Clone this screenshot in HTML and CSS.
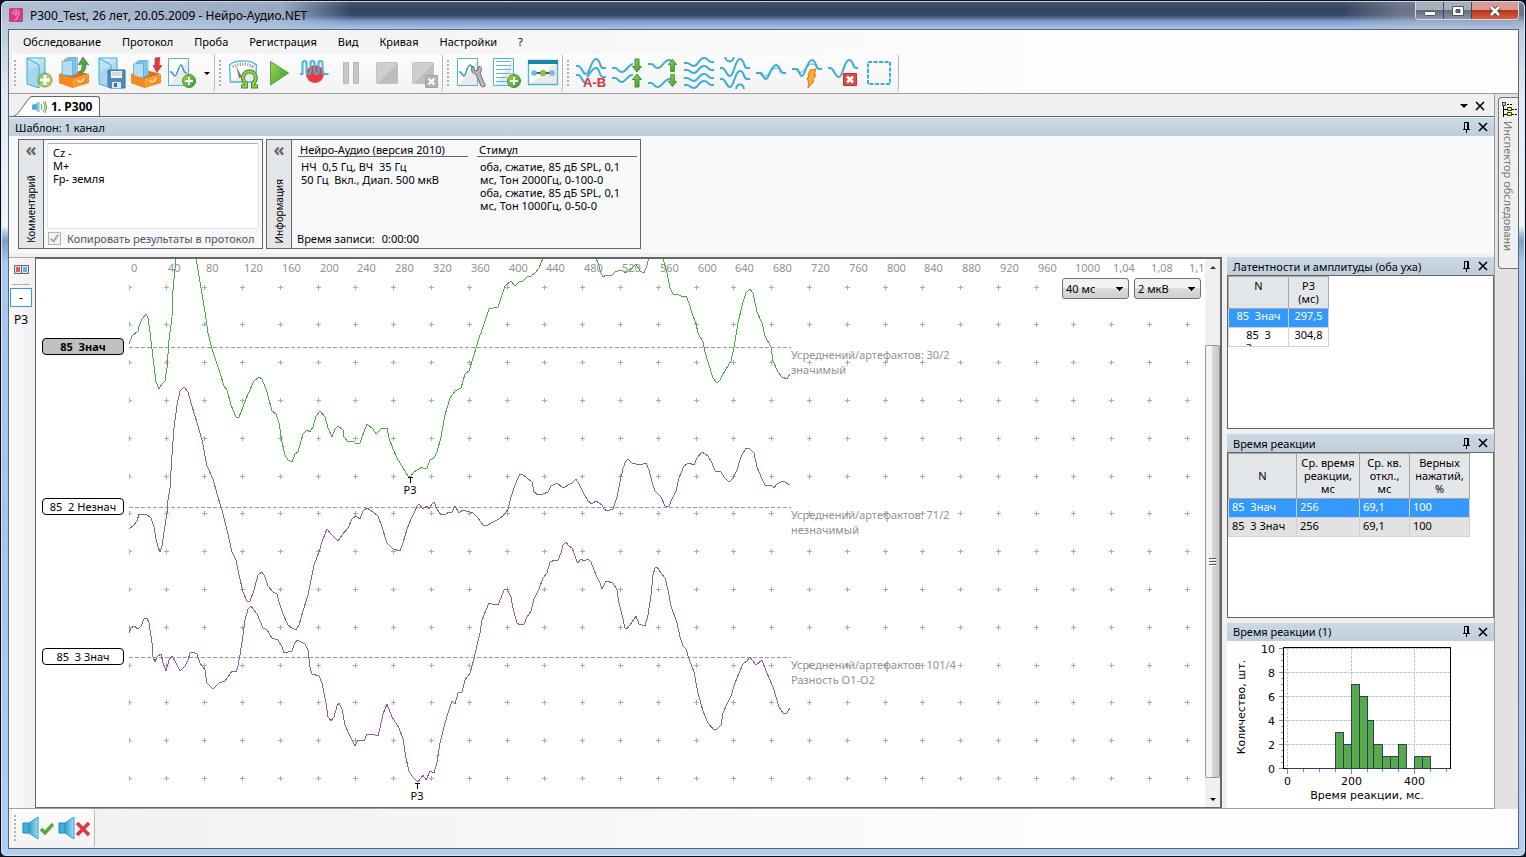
FILE: index.html
```html
<!DOCTYPE html>
<html lang="ru">
<head>
    <meta charset="UTF-8">
    <meta name="viewport" content="width=device-width, initial-scale=1.0">
    <title>P300_Test - Нейро-Аудио.NET</title>
    <link rel="stylesheet" href="styles.css">
</head>
<body>
    <!-- shared gradients and symbols -->
    <svg class="defs" width="0" height="0" aria-hidden="true">
        <defs>
            <linearGradient id="gBlue" x1="0" y1="0" x2="1" y2="1"><stop offset="0" stop-color="#e6f6fd"/><stop offset="1" stop-color="#8cc8ea"/></linearGradient>
            <linearGradient id="gPage" x1="0" y1="0" x2="1" y2="1"><stop offset="0.5" stop-color="#fff"/><stop offset="0.55" stop-color="#eceae8"/></linearGradient>
            <linearGradient id="gGreen" x1="0" y1="0" x2="1" y2="1"><stop offset="0" stop-color="#a5d64c"/><stop offset="1" stop-color="#2f9a3c"/></linearGradient>
            <linearGradient id="gGray" x1="0" y1="0" x2="1" y2="1"><stop offset="0.5" stop-color="#cfcfcf"/><stop offset="0.55" stop-color="#bebebe"/></linearGradient>
            <linearGradient id="gOrange" x1="0" y1="0" x2="1" y2="1"><stop offset="0" stop-color="#fbb040"/><stop offset="1" stop-color="#f07818"/></linearGradient>
            <linearGradient id="gSpeaker" x1="0" y1="0" x2="1" y2="0"><stop offset="0" stop-color="#2f9fd0"/><stop offset="1" stop-color="#a9dcf4"/></linearGradient>
        </defs>
        <symbol id="plus" viewBox="0 0 14 14">
            <circle cx="7" cy="7" r="6.5" fill="url(#gGreen)" stroke="#3f8f33"/>
            <path d="M7 3v8M3 7h8" stroke="#fff" stroke-width="2" fill="none"/>
        </symbol>
        <symbol id="folder" viewBox="0 0 20 32">
            <path d="M1 1h18v23l-7 2z" fill="url(#gBlue)" stroke="#45b0d6"/>
            <path d="M1 1l12 7v23L1 27z" fill="#b9e0f3" stroke="#38a8d0"/>
            <path d="M2 14l10-4v20L2 26z" fill="#9dd2ee" opacity=".7"/>
        </symbol>
        <symbol id="box" viewBox="0 0 32 18">
            <path d="M1 4l14-4 16 4-16 5z" fill="#d9741a"/>
            <path d="M1 4l14 5v9L1 13z" fill="#f58a1f"/>
            <path d="M15 9l16-5v9l-16 5z" fill="url(#gOrange)"/>
            <path d="M20 10c1 3 5 2 6-2" stroke="#ffe3b8" stroke-width="1.6" fill="none"/>
        </symbol>
        <symbol id="papers" viewBox="0 0 16 19">
            <path d="M6 .5h9.500v15H6z" fill="#a4d6f2" stroke="#5fb2dc" stroke-width=".7"/>
            <path d="M3.500 2l10-1v16h-10z" fill="#8fcaf0" stroke="#4aa6d4" stroke-width=".7"/>
            <path d="M1 4l10-1v15L1 17z" fill="#b4def6" stroke="#3f9fd0" stroke-width=".7"/>
        </symbol>
        <symbol id="arrowUp" viewBox="0 0 10 14">
            <path d="M5 .5l4.500 5.500H7v7.500H3V6H.5z" fill="url(#gGreen)" stroke="#3c8f2c"/>
        </symbol>
        <symbol id="arrowDown" viewBox="0 0 10 14">
            <path d="M5 13.500L9.500 8H7V.5H3V8H.5z" fill="url(#gGreen)" stroke="#3c8f2c"/>
        </symbol>
        <symbol id="speaker" viewBox="0 0 20 24">
            <path d="M1 7h6v10H1z" fill="#3fb0da" stroke="#2089ba"/>
            <path d="M7 7l9-6v22l-9-6z" fill="url(#gSpeaker)" stroke="#2f9fd0"/>
        </symbol>
        <symbol id="pin" viewBox="0 0 9 11">
            <path d="M2.500 7V.5h3V7M6.500 0v7M1 7.500h7M4.500 8v3" stroke="#000" fill="none" shape-rendering="crispEdges"/>
        </symbol>
        <symbol id="cross" viewBox="0 0 10 10">
            <path d="M1 1l8 8M9 1l-8 8" stroke="#000" stroke-width="1.600" fill="none"/>
        </symbol>
    </svg>

    <div class="window">
        <header class="titlebar">
            <svg class="app-icon" viewBox="0 0 14 14"><rect width="14" height="14" rx="1" fill="#d0407e"/><path d="M4 6c0-5 6-5 6-1 0 3-2 3-2 5s-2 2-2 1M6 6c0-2 2-2 2-1s-2 1-1 3" fill="none" stroke="#f7b6cf"/></svg>
            <h1 class="title">P300_Test, 26 лет, 20.05.2009 - Нейро-Аудио.NET</h1>
            <div class="window-buttons">
                <button class="win-btn" aria-label="Свернуть"><svg width="12" height="12" viewBox="0 0 12 12"><rect x=".5" y="6.500" width="11" height="4" rx="1" fill="#fff" stroke="#4b5568"/></svg></button>
                <button class="win-btn" aria-label="Развернуть"><svg width="12" height="12" viewBox="0 0 12 12"><path d="M.5 1.500h11v9H.5zM4 4.500v3h4v-3z" fill="#fff" fill-rule="evenodd" stroke="#4b5568"/></svg></button>
                <button class="win-btn win-close" aria-label="Закрыть"><svg width="14" height="12" viewBox="0 0 14 12"><path d="M3 2l8 8M11 2l-8 8" stroke="#4b4048" stroke-width="4.500"/><path d="M3 2l8 8M11 2l-8 8" stroke="#fff" stroke-width="2.600"/></svg></button>
            </div>
        </header>

        <div class="client">
            <div class="top-area">
                <nav class="menu">
                    <button>Обследование</button>
                    <button>Протокол</button>
                    <button>Проба</button>
                    <button>Регистрация</button>
                    <button>Вид</button>
                    <button>Кривая</button>
                    <button>Настройки</button>
                    <button>?</button>
                </nav>

                <div class="toolbars">
                    <div class="toolbar">
                        <span class="grip"></span>
                        <button class="tool" aria-label="Новое обследование"><svg viewBox="0 0 32 32"><use href="#folder" x="4" y="0" width="20" height="32"/><circle cx="23" cy="23" r="7" fill="#8cc63f" fill-opacity=".75" stroke="#79a83f"/><path d="M23 18v10M18 23h10" stroke="#fff" stroke-width="3"/></svg></button>
                        <button class="tool" aria-label="Открыть"><svg viewBox="0 0 32 32"><use href="#box" x="0" y="13" width="32" height="18"/><use href="#papers" x="3" y="0" width="17" height="20"/><path d="M1 17l14 5v9L1 26z" fill="#f58a1f"/><path d="M25 0l6 8-3-1c0 5-1 7-4 9l-3-1c3-2 3-4 3-8l-4 1z" fill="#4fa845" stroke="#2d7a2d" stroke-width=".6"/></svg></button>
                        <button class="tool" aria-label="Сохранить"><svg viewBox="0 0 32 32"><use href="#folder" x="4" y="0" width="20" height="32"/><path d="M14 13h17v18H16l-2-2z" fill="#4d8cc2" stroke="#3571a8"/><path d="M17 14h11v7H17z" fill="#f4f6f8"/><path d="M18 16h9M18 18h9" stroke="#b4bcc4"/><path d="M18 25h9v6h-9z" fill="#dfe6ec"/><path d="M20 26h3v4h-3z" fill="#3571a8"/></svg></button>
                        <button class="tool" aria-label="В архив"><svg viewBox="0 0 32 32"><use href="#box" x="0" y="13" width="32" height="18"/><use href="#papers" x="2" y="3" width="17" height="19"/><path d="M1 17l14 5v9L1 26z" fill="#f58a1f"/><path d="M25 1l5-.5-1 8h3l-5 7-4-7h2z" fill="#e23b3f" stroke="#b8292e" stroke-width=".6"/></svg></button>
                        <button class="tool" aria-label="Новая проба"><svg viewBox="0 0 32 32"><path d="M2.500 1.500h20v27h-20z" fill="url(#gPage)" stroke="#4fb4d8"/><path d="M4 15c3-1 3 4 5 4s4-11 6-11 2 9 6 8" fill="none" stroke="#2fa3cc" stroke-width="1.600"/><use href="#plus" x="16" y="17" width="14" height="14"/></svg></button>
                        <button class="drop" aria-label="Ещё"><span class="arrow-down"></span></button>
                    </div>
                    <div class="toolbar">
                        <span class="grip"></span>
                        <button class="tool" aria-label="Импеданс"><svg viewBox="0 0 32 32"><path d="M2.500 8C8 2.500 24 2.500 29.500 8l-1 17h-25z" fill="url(#gPage)" stroke="#4fb4d8" stroke-width="1.300"/><path d="M6 10c5-4 15-4 20 0" fill="none" stroke="#888" stroke-width="3" stroke-dasharray="1 1.500"/><path d="M9 9l6 11-3 1z" fill="#777"/><path d="M14 29.500h5v-3c-6-5-2-12 3.500-12s9 7 3.500 12v3h5" fill="none" stroke="#3d8b2f" stroke-width="4"/><path d="M15 29.500h4v-3c-6-5-2-12 3.500-12s9 7 3.500 12v3h4" fill="none" stroke="#9bd04a" stroke-width="2"/></svg></button>
                        <button class="tool" aria-label="Пуск"><svg viewBox="0 0 32 32"><path d="M7.500 4.500l18 11.500-18 12z" fill="url(#gGreen)" stroke="#4aa53c"/></svg></button>
                        <button class="tool" aria-label="Запись"><svg viewBox="0 0 32 32"><circle cx="16" cy="17" r="9" fill="#ea3a40"/><path d="M1 17h2.500V6q0-2 2-2t2 2v9q0 2 2 2t2-2V6q0-2 2-2t2 2v9q0 2 2 2t2-2V6q0-2 2-2t2 2v11h6" fill="none" stroke="#45b2da" stroke-width="2"/></svg></button>
                        <button class="tool" aria-label="Пауза" disabled><svg viewBox="0 0 32 32"><path d="M8.500 5.500h5v21h-5zM18.500 5.500h5v21h-5z" fill="#c8c8c8" stroke="#b6b6b6"/></svg></button>
                        <button class="tool" aria-label="Стоп" disabled><svg viewBox="0 0 32 32"><rect x="5.500" y="5.500" width="21" height="21" rx="1" fill="url(#gGray)" stroke="#c2c2c2"/></svg></button>
                        <button class="tool" aria-label="Отмена" disabled><svg viewBox="0 0 32 32"><rect x="5.500" y="5.500" width="21" height="21" rx="1" fill="url(#gGray)" stroke="#c2c2c2"/><path d="M18.500 18.500h12v12h-12z" fill="#b2b2b2" stroke="#a4a4a4"/><path d="M21.500 21.500l6 6M27.500 21.500l-6 6" stroke="#fff" stroke-width="2.200"/></svg></button>
                    </div>
                    <div class="toolbar">
                        <span class="grip"></span>
                        <button class="tool" aria-label="Настройка пробы"><svg viewBox="0 0 32 32"><path d="M2.500 1.500h20v27h-20z" fill="url(#gPage)" stroke="#4fb4d8"/><path d="M4 15c3-1 3 4 5 4s3-11 6-11 2 5 4 6" fill="none" stroke="#2fa3cc" stroke-width="1.600"/><path d="M18 9c-3 3-1 8 3 8l5 12q2 2 4 0 1-2-1-3l-4-10c3-3 1-7-1-7l-1 4-3 1z" fill="#b9b9b9" stroke="#6d6d6d"/></svg></button>
                        <button class="tool" aria-label="Добавить в протокол"><svg viewBox="0 0 32 32"><path d="M2.500 1.500h20v27h-20z" fill="url(#gPage)" stroke="#4fb4d8"/><path d="M5 4.500h15M5 8.500h15M5 12.500h15M5 16.500h15M5 20.500h11M5 24.500h11" stroke="#5cb9dc"/><use href="#plus" x="16" y="17" width="14" height="14"/></svg></button>
                        <button class="tool" aria-label="Схема"><svg viewBox="0 0 32 32"><path d="M1.500 3.500h29v24h-29z" fill="url(#gPage)" stroke="#4fb4d8" stroke-width="1.300"/><path d="M1 3h30v4H1z" fill="#1b83b0"/><path d="M7 16h18" stroke="#333" stroke-width="1.600"/><circle cx="7" cy="16" r="2.800" fill="#5fbde6"/><circle cx="16" cy="16" r="2.800" fill="#8cc63f" stroke="#5b9a2c" stroke-width=".6"/><circle cx="25" cy="16" r="2.800" fill="#5fbde6"/></svg></button>
                    </div>
                    <div class="toolbar">
                        <span class="grip"></span>
                        <button class="tool" aria-label="Разность"><svg viewBox="0 0 32 32"><path class="wave" d="M1 9h2c4 0 4 8 8 8s5-15 10-15 3 9 7 9h3M1 18h2c4 0 4 8 8 8M12 20c3-3 5-9 9-9s3 9 7 9h3"/><text x="8" y="30" class="ab">A-B</text></svg></button>
                        <button class="tool" aria-label="Сблизить"><svg viewBox="0 0 32 32"><path class="wave" d="M1 11h3c3 0 3 4 7 4s7-8 11-8M1 21h3c3 0 3 4 7 4s6-8 11-7"/><use href="#arrowDown" x="21" y="1" width="10" height="15"/><use href="#arrowUp" x="21" y="16" width="10" height="15"/></svg></button>
                        <button class="tool" aria-label="Раздвинуть"><svg viewBox="0 0 32 32"><path class="wave" d="M1 7h3c3 0 3 4 7 4s6-8 11-8c3 0 3 2 5 3M1 26h3c3 0 3 4 7 4s6-8 12-8"/><use href="#arrowUp" x="20" y="2" width="11" height="13"/><use href="#arrowDown" x="20" y="17" width="11" height="13"/></svg></button>
                        <button class="tool" aria-label="Разложить"><svg viewBox="0 0 32 32"><path class="wave" d="M1 6h3c3 0 3 3 7 3s5-8 10-8 4 4 7 4h3M1 13h3c3 0 3 3 7 3s5-7 10-7 4 4 7 4h3M1 21h3c3 0 3 3 7 3s5-7 10-7 4 4 7 4h3M1 28h3c3 0 3 3 7 3s5-7 10-7 4 4 7 4h3"/></svg></button>
                        <button class="tool" aria-label="Масштаб"><svg viewBox="0 0 32 32"><path class="wave" d="M1 11h2c4 0 4 8 8 8s5-17 10-17 3 9 7 9h3M1 22h2c4 0 4 8 8 8s5-16 10-16 3 8 7 8h3M6 0c2 6 7 6 9 0M17 32c1-6 7-6 8 0"/></svg></button>
                        <button class="tool" aria-label="Сгладить"><svg viewBox="0 0 32 32"><path class="wave" d="M1 16h5c2 0 2 6 5 6s5-14 10-14c4 0 4 8 7 8h3"/><path class="wave thin" d="M5 17c2 2 4 3 6 2s6-8 10-8 4 4 5 5"/></svg></button>
                        <button class="tool" aria-label="Обработать"><svg viewBox="0 0 32 32"><path class="wave" d="M1 12h5c2 0 2 7 5 7s5-16 10-16c4 0 4 9 7 9h3"/><path class="wave thin" d="M5 13c2 2 4 3 6 2s6-8 10-8 4 4 5 5"/><path d="M19 13l6-1-2 6h2l-4 6h2l-6 7 1-8h-2l2-5h-1z" fill="#fbb322" stroke="#ef6a22"/></svg></button>
                        <button class="tool" aria-label="Удалить кривую"><svg viewBox="0 0 32 32"><path class="wave" d="M1 11h2c4 0 5 9 9 9s5-17 10-17 3 8 7 8h2"/><path d="M16.500 16.500h13v12h-13z" fill="#e0474b" stroke="#c23036"/><path d="M20 19.500l6 6M26 19.500l-6 6" stroke="#fff" stroke-width="2.600"/></svg></button>
                        <button class="tool" aria-label="Выделить область"><svg viewBox="0 0 32 32"><path class="wave" d="M5 5h22v22H5z" stroke-dasharray="4 1.500"/></svg></button>
                    </div>
                </div>
            </div>

            <div class="workspace">
                <main class="dock">
                    <div class="tabs">
                        <svg class="tab-slant" viewBox="0 0 18 20"><path d="M0 20C4 19 6 15 9 11l5-7Q16 1 18 1v19z" fill="#fff"/><path d="M0 19.500C4 19 6 14 9 10.500l5-7Q16 .5 18 .5" fill="none" stroke="#666"/></svg>
                        <button class="tab"><svg width="15" height="14" viewBox="0 0 15 14"><use href="#speaker" x="0" y="0" width="9" height="14"/><path d="M9 4q2 3 0 6M11 2q4 5 0 10M13 1q3 6 0 12" fill="none" stroke="#5aa53f"/></svg>1. P300</button>
                        <div class="tab-tools">
                            <button aria-label="Список вкладок"><span class="arrow-down big"></span></button>
                            <button aria-label="Закрыть вкладку"><svg width="10" height="10"><use href="#cross"/></svg></button>
                        </div>
                    </div>

                    <section class="panel">
                        <div class="panel-head">
                            <h2>Шаблон: 1 канал</h2>
                            <button aria-label="Закрепить"><svg width="9" height="11"><use href="#pin"/></svg></button>
                            <button aria-label="Закрыть"><svg width="10" height="10"><use href="#cross"/></svg></button>
                        </div>
                        <div class="template">
                            <div class="card comment">
                                <div class="card-side"><button>«</button><span>Комментарий</span></div>
                                <div class="card-body">
                                    <textarea aria-label="Комментарий">Cz -
M+
Fp- земля</textarea>
                                    <label class="check"><input type="checkbox" checked disabled>Копировать результаты в протокол</label>
                                </div>
                            </div>
                            <div class="card info">
                                <div class="card-side"><button>«</button><span>Информация</span></div>
                                <div class="card-body">
                                    <div class="info-cols">
                                        <div>
                                            <h3>Нейро-Аудио (версия 2010)</h3>
                                            <p>НЧ  0,5 Гц, ВЧ  35 Гц
50 Гц  Вкл., Диап. 500 мкВ</p>
                                        </div>
                                        <div>
                                            <h3>Стимул</h3>
                                            <p>оба, сжатие, 85 дБ SPL, 0,1
мс, Тон 2000Гц, 0-100-0
оба, сжатие, 85 дБ SPL, 0,1
мс, Тон 1000Гц, 0-50-0</p>
                                        </div>
                                    </div>
                                    <div class="rec-time"><span>Время записи:</span><span>0:00:00</span></div>
                                </div>
                            </div>
                        </div>
                    </section>

                    <div class="lower">
                        <div class="side-tools">
                            <button class="side-icon" aria-label="Стороны"><svg width="15" height="9" viewBox="0 0 15 9"><path d="M.5.5h14v8H.5zM7.500 0v9" fill="#e8e8e8" stroke="#666"/><path d="M2 2h4v5H2z" fill="#e9506a"/><path d="M9 2h4v5H9z" fill="#5cb8e0"/></svg></button>
                            <hr>
                            <button class="side-btn active">-</button>
                            <button class="side-btn">P3</button>
                        </div>

                        <div class="chart">
                            <div class="plot">
                                <svg id="plot" class="plot-svg" width="100%" height="100%"></svg>
                                <button class="trace-label t1">85  Знач</button>
                                <button class="trace-label t2">85  2 Незнач</button>
                                <button class="trace-label t3">85  3 Знач</button>
                                <div class="scales">
                                    <select aria-label="Развёртка"><option>40 мс</option></select>
                                    <select aria-label="Чувствительность"><option>2 мкВ</option></select>
                                </div>
                            </div>
                            <div class="scrollbar">
                                <button aria-label="Вверх"><span class="arrow-up"></span></button>
                                <div class="track"><div class="thumb"><i></i></div></div>
                                <button aria-label="Вниз"><span class="arrow-down"></span></button>
                            </div>
                        </div>

                        <aside class="right">
                            <section class="panel latency">
                                <div class="panel-head">
                                    <h2>Латентности и амплитуды (оба уха)</h2>
                                    <button aria-label="Закрепить"><svg width="9" height="11"><use href="#pin"/></svg></button>
                                    <button aria-label="Закрыть"><svg width="10" height="10"><use href="#cross"/></svg></button>
                                </div>
                                <div class="panel-body">
                                    <table class="grid centered">
                                        <colgroup><col class="w60"><col class="w40"></colgroup>
                                        <thead><tr><th>N</th><th>P3<br>(мс)</th></tr></thead>
                                        <tbody>
                                            <tr class="selected"><td><div class="cell">85  Знач</div></td><td><div class="cell">297,5</div></td></tr>
                                            <tr><td><div class="cell">85  3
Знач</div></td><td><div class="cell">304,8</div></td></tr>
                                        </tbody>
                                    </table>
                                </div>
                            </section>
                            <section class="panel reaction">
                                <div class="panel-head">
                                    <h2>Время реакции</h2>
                                    <button aria-label="Закрепить"><svg width="9" height="11"><use href="#pin"/></svg></button>
                                    <button aria-label="Закрыть"><svg width="10" height="10"><use href="#cross"/></svg></button>
                                </div>
                                <div class="panel-body">
                                    <table class="grid">
                                        <colgroup><col class="w68"><col class="w63"><col class="w50"><col class="w60"></colgroup>
                                        <thead><tr><th>N</th><th>Ср. время<br>реакции,<br>мс</th><th>Ср. кв.<br>откл.,<br>мс</th><th>Верных<br>нажатий,<br>%</th></tr></thead>
                                        <tbody>
                                            <tr class="selected"><td><div class="cell">85  Знач</div></td><td><div class="cell">256</div></td><td><div class="cell">69,1</div></td><td><div class="cell">100</div></td></tr>
                                            <tr class="alt"><td><div class="cell">85  3 Знач</div></td><td><div class="cell">256</div></td><td><div class="cell">69,1</div></td><td><div class="cell">100</div></td></tr>
                                        </tbody>
                                    </table>
                                </div>
                            </section>
                            <section class="panel histogram">
                                <div class="panel-head">
                                    <h2>Время реакции (1)</h2>
                                    <button aria-label="Закрепить"><svg width="9" height="11"><use href="#pin"/></svg></button>
                                    <button aria-label="Закрыть"><svg width="10" height="10"><use href="#cross"/></svg></button>
                                </div>
                                <svg id="hist" class="hist-svg" width="266" height="166"></svg>
                            </section>
                        </aside>
                    </div>
                </main>

                <div class="inspector">
                    <button class="inspector-tab">
                        <svg width="16" height="16" viewBox="0 0 16 16"><path d="M2.500 4v12M2.500 8.500h4M2.500 13.500h4" stroke="#000" fill="none"/><path d="M6 3.500h6M11 8.500h5M11 13.500h5" stroke="#000" stroke-dasharray="2 1"/><path d="M1.500 1.500h3v3h-3zM6.500 6.500h4v3h-4zM6.500 11.500h4v3h-4z" fill="#ff0" stroke="#333"/></svg>
                        <span>Инспектор обследовани</span>
                    </button>
                </div>
            </div>

            <footer class="bottom-bar">
                <div class="toolbar">
                    <span class="grip"></span>
                    <button class="tool" aria-label="Включить звук"><svg viewBox="0 0 32 32"><use href="#speaker" x="0" y="4" width="20" height="24"/><path d="M19 17l4 4 8-9" fill="none" stroke="#5aa83c" stroke-width="3.500"/></svg></button>
                    <button class="tool" aria-label="Выключить звук"><svg viewBox="0 0 32 32"><use href="#speaker" x="0" y="4" width="20" height="24"/><path d="M19 11l12 12M31 11L19 23" fill="none" stroke="#e0383c" stroke-width="3.500"/></svg></button>
                </div>
            </footer>
        </div>
    </div>

    <script src="script.js"></script>
</body>
</html>
```
FILE: styles.css
```css
* {
    box-sizing: border-box;
}

body {
    margin: 0;
    height: 100vh;
    background: #10131a;
    font-family: "Noto Sans", sans-serif;
    font-size: 11px;
    color: #000;
}

button {
    margin: 0;
    padding: 0;
    border: none;
    background: none;
    font: inherit;
    color: inherit;
    display: flex;
    align-items: center;
    justify-content: center;
}

h1, h2, h3, p {
    margin: 0;
    font-size: inherit;
    font-weight: normal;
}

.defs {
    position: absolute;
}

.window {
    display: flex;
    flex-direction: column;
    height: 100vh;
    padding: 0 6px 7px 7px;
    border: 1px solid #0b0e14;
    border-radius: 7px 7px 6px 6px;
    background: linear-gradient(to bottom, #a9bdd6 0, #dfe9f5 90px, #f2f5f9 225px, #a8c8ea 232px, #7d9fc8 240px, #a9c9ee 262px, #a4c4e8 60%, #b0d0f2 100%);
    box-shadow: inset 0 0 0 1px #d4e6f8;
}

/* title bar */
.titlebar {
    display: flex;
    align-items: center;
    flex: none;
    height: 28px;
    margin: 0 -5px 0 -6px;
    padding: 0 0 1px 7px;
    background:
        linear-gradient(to right, rgba(190, 206, 226, 0.9) 0, rgba(175, 194, 218, 0.8) 280px, rgba(120, 140, 170, 0) 350px),
        linear-gradient(to right, rgba(200, 200, 210, 0) 88%, rgba(190, 190, 200, 0.4) 92%),
        linear-gradient(to bottom, #41526f 0, #33435f 30%, #394b69 50%, #7d9cc8 72%, #a5c6ee 100%);
    border-top: 1px solid #cfd8e6;
    border-radius: 6px 6px 0 0;
}

.app-icon {
    width: 14px;
    height: 14px;
}

.title {
    flex: 1;
    margin-left: 7px;
    font-size: 12px;
}

.window-buttons {
    display: flex;
    align-self: flex-start;
    margin-right: 5px;
    border: 1px solid #d5dbe4;
    border-top: none;
    border-radius: 0 0 4px 4px;
    overflow: hidden;
}

.win-btn {
    width: 28px;
    height: 17px;
    background: linear-gradient(#a9b0bb 45%, #5f6a7c 50%, #8b97aa);
    border-right: 1px solid #40495a;
}

.win-close {
    width: 46px;
    background: linear-gradient(#d99c90 45%, #b8341c 50%, #d8603c);
    border-right: none;
}

.client {
    flex: 1;
    display: flex;
    flex-direction: column;
    min-height: 0;
    border: 1px solid #5b6675;
    background: #f0f0f0;
}

/* menu and toolbars */
.top-area {
    flex: none;
    background: linear-gradient(to right, #f0f0f0, #fdfdfd 70%);
    border-bottom: 1px solid #9c9c9c;
}

.menu {
    display: flex;
    height: 24px;
    padding: 0 0 1px 4px;
}

.menu button {
    padding: 0 11px 0 10px;
}

.toolbars {
    display: flex;
    height: 39px;
    padding: 0 3px;
}

.toolbar {
    display: flex;
    align-items: center;
    height: 38px;
    padding-right: 1px;
    border-right: 1px solid #b9b9b9;
    border-radius: 3px;
    background: linear-gradient(#fcfcfc, #f3f3f3);
}

.grip {
    width: 2px;
    height: 27px;
    margin: 0 4px;
    background: repeating-linear-gradient(#b0b0b0 0, #b0b0b0 2px, transparent 2px, transparent 4px);
}

.toolbar:first-child .grip {
    margin-left: 2px;
}

.tool {
    width: 36px;
    height: 36px;
}

.tool svg {
    width: 32px;
    height: 32px;
}

.wave {
    fill: none;
    stroke: #3baed4;
    stroke-width: 2;
}

.wave.thin {
    stroke-width: 1;
}

.ab {
    font: bold 13px "Liberation Sans", sans-serif;
    fill: #dc3237;
}

.drop {
    width: 13px;
    height: 36px;
}

.arrow-down,
.arrow-up {
    border: 3px solid transparent;
    border-top-color: #000;
    border-bottom: none;
}

.arrow-down.big {
    border-width: 4px 4px 0;
}

.arrow-up {
    border-bottom: 3px solid #333;
    border-top: none;
}

/* workspace */
.workspace {
    flex: 1;
    display: flex;
    min-height: 0;
    background: #e2e2e2;
}

.dock {
    flex: 1;
    display: flex;
    flex-direction: column;
    min-width: 0;
    background: #f0f0f0;
    border-right: 1px solid #9c9c9c;
    border-bottom: 1px solid #9c9c9c;
}

.tabs {
    display: flex;
    align-items: flex-end;
    height: 23px;
    padding-left: 5px;
    border-bottom: 1px solid #666;
}

.tab-slant {
    width: 18px;
    height: 20px;
}

.tab {
    gap: 4px;
    height: 20px;
    padding-right: 7px;
    border-top: 1px solid #666;
    border-right: 1px solid #666;
    border-radius: 0 3px 0 0;
    background: #fff;
    font-size: 12px;
    font-weight: bold;
}

.tab-tools {
    display: flex;
    gap: 7px;
    margin-left: auto;
    padding: 0 9px 5px 0;
}

.panel-head {
    display: flex;
    align-items: center;
    gap: 7px;
    flex: none;
    height: 18px;
    padding: 0 6px;
    background: linear-gradient(#cbd8e5, #c0cdda);
}

.panel-head h2 {
    flex: 1;
    white-space: nowrap;
}

.dock > .panel {
    margin-top: 1px;
}

.template {
    display: flex;
    gap: 3px;
    height: 117px;
    padding: 3px 9px 4px;
    background: #f7f8fa;
}

.card {
    display: flex;
    height: 110px;
    border: 1px solid #666;
}

.comment {
    width: 245px;
}

.info {
    width: 375px;
}

.card-side {
    display: flex;
    flex-direction: column;
    align-items: center;
    justify-content: space-between;
    flex: none;
    width: 25px;
    padding-bottom: 5px;
    border-right: 1px solid #666;
    background: #e4e7ea;
}

.card-side button {
    height: 18px;
    font-size: 18px;
    font-weight: bold;
    color: #666;
}

.card-side span {
    writing-mode: vertical-rl;
    transform: rotate(180deg);
    font-size: 10px;
}

.card-body {
    flex: 1;
    display: flex;
    flex-direction: column;
    justify-content: space-between;
    min-width: 0;
    padding: 3px;
    line-height: 13px;
}

textarea {
    display: block;
    width: 100%;
    height: 86px;
    padding: 2px 5px;
    border: 1px solid #e0e3e6;
    border-top-color: #abadb3;
    border-radius: 2px;
    font: inherit;
    resize: none;
}

.check {
    display: flex;
    align-items: center;
    gap: 6px;
    color: #4c5568;
    white-space: nowrap;
}

.check input {
    appearance: none;
    width: 13px;
    height: 13px;
    margin: 0 0 0 1px;
    border: 1px solid #b4b4b4;
    background: #f4f4f4;
    position: relative;
}

.check input::after {
    content: "";
    position: absolute;
    left: 3px;
    top: 0;
    width: 3px;
    height: 7px;
    border: solid #aaa;
    border-width: 0 2px 2px 0;
    transform: rotate(35deg);
}

.info-cols {
    display: grid;
    grid-template-columns: 170px 160px;
    gap: 9px;
    padding-left: 3px;
}

.info-cols h3 {
    padding-left: 2px;
    border-bottom: 1px solid #666;
}

.info-cols p {
    padding: 3px 0 0 3px;
    white-space: pre;
}

.rec-time {
    display: flex;
    gap: 7px;
    padding: 0 2px;
}

.lower {
    flex: 1;
    display: flex;
    min-height: 0;
    margin-top: 4px;
}

.side-tools {
    display: flex;
    flex-direction: column;
    align-items: center;
    flex: none;
    width: 26px;
    padding: 7px 2px 0 0;
    border-top: 1px solid #aaa;
    background: linear-gradient(to right, #fafafa, #f0f0f0);
}

.side-tools hr {
    width: 18px;
    margin: 10px 0 3px;
    border: none;
    border-top: 1px solid #b0b0b0;
}

.side-btn {
    width: 22px;
    height: 19px;
    margin-bottom: 3px;
    font-size: 12px;
}

.side-btn.active {
    border: 1px solid #3399ff;
    background: #fff;
}

/* chart */
.chart {
    flex: 1;
    display: flex;
    min-width: 0;
    border: 1px solid #666;
    border-top-width: 2px;
    border-right-width: 2px;
    background: #fff;
}

.plot {
    position: relative;
    flex: 1;
    min-width: 0;
    overflow: hidden;
}

.plot-svg {
    display: block;
}

.plot-svg text {
    font-size: 11px;
    fill: #919191;
}

.plot-svg .marker text {
    fill: #000;
}

.plot-svg .grid-cross {
    fill: none;
    stroke: #aaa;
    shape-rendering: crispEdges;
}

.plot-svg .base {
    stroke: #999;
    stroke-dasharray: 4 2;
    shape-rendering: crispEdges;
}

.plot-svg .trace {
    fill: none;
    shape-rendering: crispEdges;
}

.plot-svg .marker path {
    stroke: #000;
    fill: none;
    shape-rendering: crispEdges;
}

/* labels lie on the canvas at the baseline of their curve */
.trace-label {
    position: absolute;
    left: 6px;
    width: 82px;
    height: 17px;
    border: 1px solid #000;
    border-radius: 4px;
    background: #fff;
    white-space: pre;
}

.t1 {
    top: 79px;
    background: #c0c0c0;
    font-weight: bold;
}

.t2 {
    top: 239px;
}

.t3 {
    top: 389px;
}

.scales {
    position: absolute;
    top: 19px;
    right: 4px;
    display: flex;
    gap: 5px;
}

.scales select {
    appearance: none;
    width: 67px;
    height: 21px;
    padding: 0 3px;
    border: 1px solid #707070;
    border-radius: 3px;
    background:
        linear-gradient(to bottom right, #000 50%, transparent 50%) right 4px center / 4px 4px no-repeat,
        linear-gradient(to bottom left, #000 50%, transparent 50%) right 8px center / 4px 4px no-repeat,
        linear-gradient(#f2f2f2 50%, #dcdcdc 50%, #cfcfcf);
    font: inherit;
}

.scrollbar {
    display: flex;
    flex-direction: column;
    flex: none;
    width: 15px;
    background: #f0f0f0;
}

.scrollbar button {
    height: 16px;
}

.track {
    flex: 1;
    display: flex;
    flex-direction: column;
    padding-top: 70px;
    padding-bottom: 13px;
}

.thumb {
    flex: 1;
    display: flex;
    align-items: center;
    justify-content: center;
    border: 1px solid #979797;
    border-radius: 2px;
    background: linear-gradient(to right, #f4f4f4 45%, #d8d8dc 50%, #c4c4ca);
}

.thumb i {
    width: 7px;
    height: 8px;
    background: repeating-linear-gradient(#555 0, #555 1px, #fff 1px, #fff 2px, transparent 2px, transparent 3px);
}

/* right column */
.right {
    display: flex;
    flex-direction: column;
    gap: 5px;
    flex: none;
    width: 272px;
    padding: 0 0 0 5px;
}

.right .panel {
    display: flex;
    flex-direction: column;
    min-height: 0;
}

.latency {
    flex: 172;
}

.reaction {
    flex: 183;
}

.histogram {
    flex: 185;
    background: #fff;
}

.panel-body {
    flex: 1;
    border: 1px solid #666;
    background: #fff;
    overflow: hidden;
}

.grid {
    table-layout: fixed;
    border-collapse: collapse;
    width: 0;
    line-height: 13px;
}

.w40 { width: 40px; }
.w50 { width: 50px; }
.w60 { width: 60px; }
.w63 { width: 63px; }
.w68 { width: 68px; }

.grid th {
    padding: 2px 0 3px;
    border: 1px solid #a8a8a8;
    background: #e4e7ea;
    font-weight: normal;
    white-space: nowrap;
}

.centered th {
    vertical-align: top;
}

.grid td {
    padding: 0;
    border: 1px solid #d0d0d0;
}

.cell {
    height: 18px;
    padding: 1px 3px;
    overflow: hidden;
    white-space: pre;
}

.centered .cell {
    text-align: center;
    padding: 0;
}

.selected td {
    background: #3399ff;
    color: #fff;
}

.alt td {
    background: #e2e2e2;
}

.hist-svg text {
    font: 11px "DejaVu Sans", sans-serif;
}

.hist-svg path,
.hist-svg rect {
    shape-rendering: crispEdges;
}

/* auto-hidden inspector */
.inspector {
    flex: none;
    width: 23px;
    padding: 3px 0 0 3px;
}

.inspector-tab {
    flex-direction: column;
    justify-content: flex-start;
    gap: 4px;
    width: 20px;
    height: 172px;
    padding-top: 3px;
    border: 1px solid #777;
    border-right: none;
    border-radius: 4px 0 0 4px;
    background: #f0f0f0;
    color: #777;
}

.inspector-tab span {
    writing-mode: vertical-rl;
    white-space: nowrap;
}

.bottom-bar {
    flex: none;
    height: 39px;
    padding: 0 3px;
    background: linear-gradient(to right, #f0f0f0, #fdfdfd 70%);
}

.bottom-bar .toolbar {
    width: 83px;
}
```
FILE: script.js
```js
const SVG_NS = 'http://www.w3.org/2000/svg';

function add(parent, tag, attrs, text) {
    const el = document.createElementNS(SVG_NS, tag);
    for (const key in attrs) el.setAttribute(key, attrs[key]);
    if (text !== undefined) el.textContent = text;
    parent.appendChild(el);
    return el;
}

// ---- averaged curves ----
const STEP = 37.8;      // one grid cell, 40 ms / 2 uV
const LEFT = 129;
const plot = add(document.getElementById('plot'), 'g', { transform: 'translate(-36 -259)' });

const curves = [
    {
        color: '#4ca445', base: 347, note: ['Усреднений/артефактов: 30/2', 'значимый'],
        points: '129,344 132,336 138,331 139,326 142,319 146,314 148,318 150,332 153,358 156,382 159,389 162,384 165,381 167,368 169,340 172,317 173,290 176,258 185,200 196,258 201,288 205,312 208,333 212,349 220,373 224,386 227,390 231,405 236,417 239,417 243,407 248,394 254,381 259,377 262,379 267,392 272,411 276,414 279,423 282,442 285,455 288,460 292,462 295,454 298,452 303,434 307,430 310,432 313,427 316,416 320,411 325,417 328,428 332,437 335,429 338,426 343,430 344,437 347,441 352,441 357,444 360,443 362,437 364,432 367,424 373,429 376,434 381,429 387,428 389,438 393,449 397,458 403,468 408,476 410,477 414,472 422,467 424,469 427,468 430,460 434,458 437,452 441,437 445,415 450,398 455,391 461,388 465,374 469,371 474,355 479,338 482,330 486,318 489,309 493,308 498,307 500,301 502,295 505,286 511,281 515,286 520,281 523,281 527,277 531,276 535,273 539,268 543,258 560,235 580,235 596,258 598,263 601,273 603,277 606,275 612,275 615,272 621,270 626,273 629,270 632,268 636,264 640,271 644,273 647,265 649,258 655,240 663,258 667,273 670,288 673,294 677,294 681,296 686,296 689,303 692,313 696,324 698,333 703,342 705,352 708,362 713,378 717,383 720,380 722,376 726,369 731,361 734,347 738,323 743,302 746,293 750,289 753,293 757,312 762,323 765,336 771,347 773,361 778,372 782,377 787,379 790,374'
    },
    {
        color: '#8a5f96', base: 507, note: ['Усреднений/артефактов: 71/2', 'незначимый'],
        points: '129,529 133,526 137,521 139,514 146,514 151,518 154,527 156,539 158,547 160,552 162,546 164,532 167,513 168,500 170,488 172,455 174,428 177,405 180,391 184,387 188,392 191,403 195,416 202,440 207,466 213,479 217,494 222,510 228,534 232,552 236,560 239,575 243,592 247,601 250,601 254,590 258,575 262,572 265,577 268,586 273,592 277,594 279,602 283,614 288,625 292,628 296,630 299,625 303,611 308,595 311,580 314,565 319,552 323,539 327,529 331,534 338,541 342,535 348,528 352,519 356,516 360,519 363,511 367,508 373,512 378,516 382,527 387,543 393,549 400,551 403,543 407,529 411,519 415,511 417,506 419,504 423,509 427,506 429,509 432,504 434,502 437,509 441,515 446,514 449,512 452,512 455,506 459,513 463,510 473,513 478,518 483,525 488,525 493,522 499,519 503,516 508,509 511,497 514,488 517,480 520,474 522,474 527,478 532,482 534,492 538,495 543,494 548,492 551,486 557,483 563,488 572,483 576,479 579,484 583,492 588,501 592,504 596,501 602,505 604,509 607,511 613,509 617,497 620,482 623,468 626,461 628,459 632,463 640,465 646,463 649,470 652,482 655,491 661,497 665,506 669,506 672,499 676,491 679,478 684,466 689,463 694,465 697,458 702,452 708,456 712,463 715,471 721,472 724,477 729,482 733,478 737,470 741,457 746,448 749,448 754,453 757,467 762,479 765,485 771,485 774,488 777,484 783,481 790,485'
    },
    {
        color: '#8a5f96', base: 657, note: ['Усреднений/артефактов: 101/4', 'Разность O1-O2'],
        points: '129,633 131,628 134,626 138,629 141,626 144,619 147,618 149,623 152,643 153,657 155,662 157,657 161,654 163,663 166,671 169,660 172,656 176,663 180,671 185,666 188,660 190,653 193,652 197,654 200,663 205,670 207,683 213,689 219,683 225,681 228,677 232,671 236,672 238,666 240,655 243,635 245,620 248,609 251,606 257,614 263,628 267,630 272,638 278,640 282,647 284,653 292,651 294,645 297,640 305,644 308,650 310,667 312,674 319,676 322,683 326,703 328,717 331,721 334,717 337,706 339,703 342,709 345,725 350,736 355,746 358,740 364,741 367,734 372,734 378,736 380,728 383,714 387,704 392,717 399,728 403,739 406,758 409,771 412,776 418,782 423,775 426,780 430,771 434,773 437,762 440,743 444,727 447,716 452,701 455,704 458,693 462,692 465,680 470,673 474,659 477,645 480,633 482,620 486,610 489,603 492,604 498,605 501,598 504,590 507,589 511,597 513,608 517,623 520,625 524,624 527,617 531,611 534,599 539,589 543,578 547,573 550,562 555,560 558,560 561,553 563,545 566,542 569,546 572,548 574,553 577,562 578,563 581,559 584,561 588,559 591,562 596,575 600,583 602,589 606,581 613,583 617,590 619,603 622,615 625,628 627,629 632,622 636,616 639,624 645,626 648,615 651,595 653,575 655,568 657,567 661,573 665,578 668,590 671,606 677,623 680,637 683,646 686,649 689,659 694,672 698,693 703,711 708,723 714,730 717,729 721,725 723,713 727,704 731,696 735,683 739,673 743,664 747,661 750,657 756,665 762,660 766,671 773,687 779,707 783,713 787,713 790,708'
    }
];

let crosses = '';
for (let col = 0; col < 29; col++) {
    const x = LEFT + Math.floor(col * STEP);
    const label = col < 26 ? String(col * 40) : col < 28 ? (col / 25).toFixed(2).replace('.', ',') : '1,1';
    add(plot, 'text', { x: x + 2, y: 272 }, label);
    for (let row = 0; row < 14; row++) {
        const y = 287 + Math.floor(row * STEP);
        const arm = col === 0 ? 0 : 2;
        crosses += `M${x - arm} ${y + 0.5}h${3 + arm}M${x + 0.5} ${y - 2}v5`;
    }
}
add(plot, 'path', { class: 'grid-cross', d: crosses });

curves.forEach(c => {
    add(plot, 'line', { class: 'base', x1: LEFT, x2: 791, y1: c.base + 0.5, y2: c.base + 0.5 });
    c.note.forEach((line, i) => add(plot, 'text', { x: 791, y: c.base + 12 + i * 15 }, line));
    add(plot, 'polyline', { class: 'trace', points: c.points, stroke: c.color });
});

[[410, 477], [417, 783]].forEach(([x, y]) => {
    const marker = add(plot, 'g', { class: 'marker' });
    add(marker, 'path', { d: `M${x - 2} ${y + 0.5}h5M${x + 0.5} ${y}v6` });
    add(marker, 'text', { x: x, y: y + 17, 'text-anchor': 'middle' }, 'P3');
});

// ---- reaction time histogram ----
const hist = document.getElementById('hist');
const ZERO_X = 60.5;
const ZERO_Y = 127.5;
const edges = [108, 116, 124, 132, 140, 146, 155, 163, 171, 179, 187, 195, 203];
const counts = [3, 2, 7, 6, 4, 2, 1, 1, 2, 0, 1, 1];

for (let n = 0; n <= 10; n += 2) {
    const y = ZERO_Y - n * 12;
    add(hist, 'path', { d: `M57 ${y}h166`, stroke: '#c8c8c8', 'stroke-dasharray': '3 1' });
    add(hist, 'path', { d: `M52 ${y}h4`, stroke: '#888' });
    add(hist, 'text', { x: 48, y: y + 4, 'text-anchor': 'end' }, n);
}
for (let n = 0; n < 20; n++) {
    add(hist, 'path', { d: `M54 ${ZERO_Y - n * 6}h2`, stroke: '#888' });
}
for (let t = 0; t <= 500; t += 50) {
    const x = Math.floor(ZERO_X + t * 0.318) + 0.5;
    const major = t % 200 === 0;
    add(hist, 'path', { d: `M${x} 128v${major ? 5 : 3}`, stroke: '#888' });
    if (major) {
        add(hist, 'path', { d: `M${x} 7v120`, stroke: '#c8c8c8', 'stroke-dasharray': '3 1' });
        add(hist, 'text', { x: x, y: 144, 'text-anchor': 'middle' }, t);
    }
}
counts.forEach((n, i) => {
    if (!n) return;
    add(hist, 'rect', {
        x: edges[i] + 0.5, y: ZERO_Y - n * 12,
        width: edges[i + 1] - edges[i], height: n * 12,
        fill: '#58a94a', stroke: '#263f63'
    });
});
add(hist, 'rect', { x: 56.5, y: 6.5, width: 167, height: 121, fill: 'none', stroke: '#000' });
add(hist, 'path', { d: 'M60 127.5h163', stroke: '#263f63' });
add(hist, 'text', { x: 140, y: 158, 'text-anchor': 'middle' }, 'Время реакции, мс.');
add(hist, 'text', { x: 0, y: 0, transform: 'translate(18 66) rotate(-90)', 'text-anchor': 'middle' }, 'Количество, шт.');
```
